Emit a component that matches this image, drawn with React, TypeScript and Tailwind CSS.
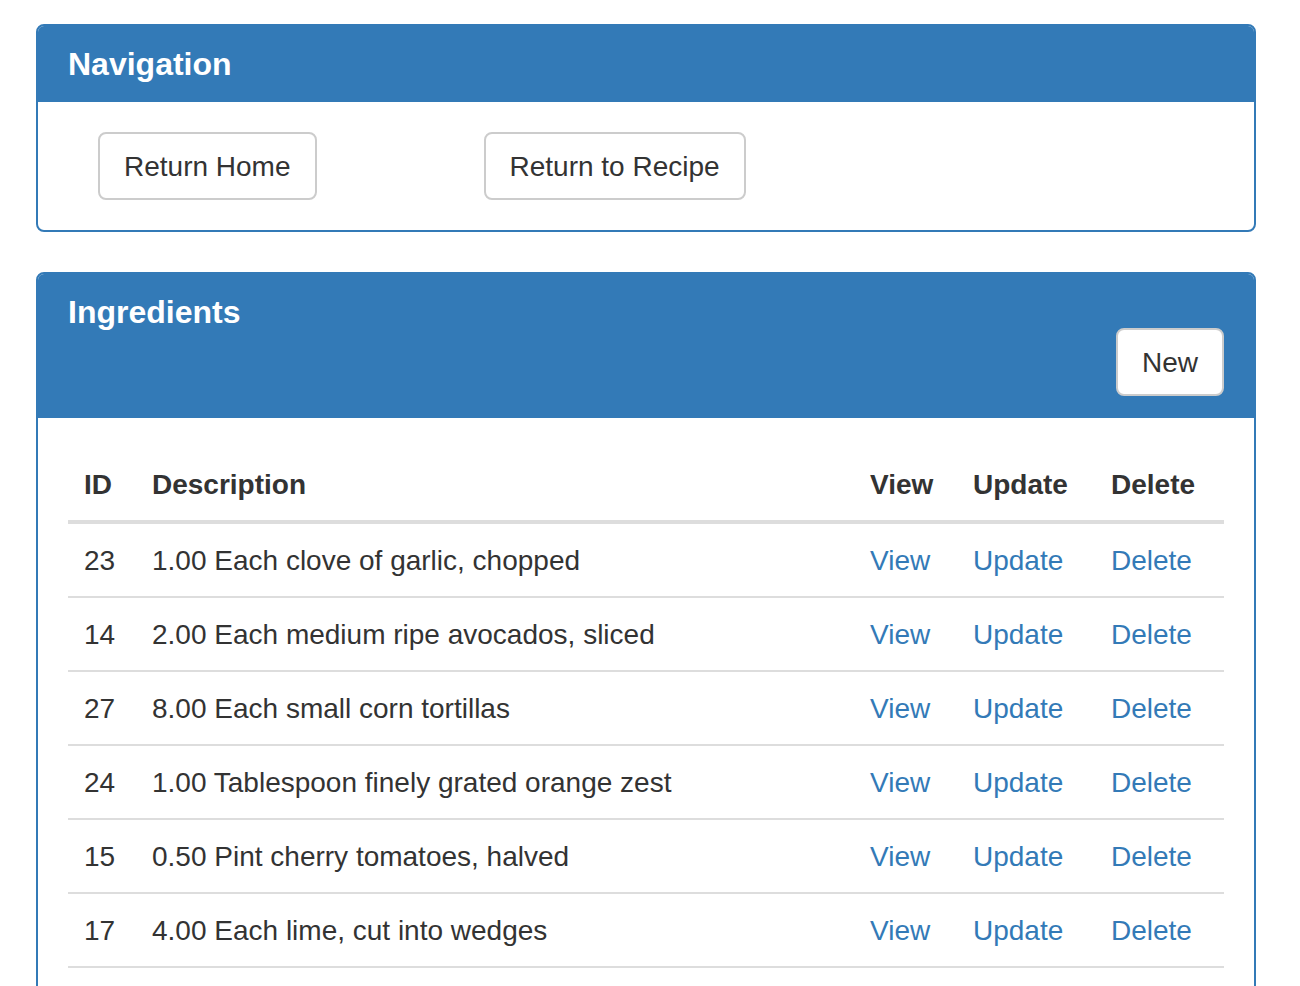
import React from "react";

type Ingredient = { id: number; description: string };

const INGREDIENTS: Ingredient[] = [
  { id: 23, description: "1.00 Each clove of garlic, chopped" },
  { id: 14, description: "2.00 Each medium ripe avocados, sliced" },
  { id: 27, description: "8.00 Each small corn tortillas" },
  { id: 24, description: "1.00 Tablespoon finely grated orange zest" },
  { id: 15, description: "0.50 Pint cherry tomatoes, halved" },
  { id: 17, description: "4.00 Each lime, cut into wedges" },
];

const btn =
  "inline-block rounded-[8px] border-2 border-[#ccc] bg-white px-[24px] pt-[13px] pb-[11px] text-[28px] leading-[40px] text-[#333]";

const Panel: React.FC<{ title: string; action?: React.ReactNode; children: React.ReactNode }> = ({ title, action, children }) => (
  <div className="mb-[40px] rounded-[8px] border-2 border-[#337ab7] bg-white">
    <div className="rounded-t-[6px] border-b-2 border-[#337ab7] bg-[#337ab7] px-[30px] py-[20px]">
      <h3 className="pt-[2px] text-[32px] leading-[32px] font-bold text-white">{title}</h3>
      {action && <div className="flex justify-end">{action}</div>}
    </div>
    <div className="p-[30px]">{children}</div>
  </div>
);

export default function App() {
  return (
    <div className="min-h-[986px] bg-white pt-[24px] pl-[36px] font-['Liberation_Sans',Arial,sans-serif] text-[#333]">
      <div className="w-[1220px]">
        <Panel title="Navigation">
          <div className="flex pl-[30px]">
            <a href="#" className={btn}>Return Home</a>
            <a href="#" className={`${btn} ml-[167px]`}>Return to Recipe</a>
          </div>
        </Panel>

        <Panel title="Ingredients" action={<a href="#" className={btn}>New</a>}>
          <table className="w-full table-fixed text-[28px] leading-[40px]">
            <colgroup>
              <col className="w-[68px]" />
              <col />
              <col className="w-[103px]" />
              <col className="w-[138px]" />
              <col className="w-[129px]" />
            </colgroup>
            <thead>
              <tr>
                {["ID", "Description", "View", "Update", "Delete"].map((h) => (
                  <th key={h} className="border-b-4 border-[#ddd] px-[16px] pt-[17px] pb-[15px] text-left font-bold">
                    {h}
                  </th>
                ))}
              </tr>
            </thead>
            <tbody>
              {INGREDIENTS.map((row) => (
                <tr key={row.id}>
                  <td className="border-y-2 border-[#ddd] px-[16px] pt-[17px] pb-[15px]">{row.id}</td>
                  <td className="border-y-2 border-[#ddd] px-[16px] pt-[17px] pb-[15px] whitespace-nowrap">{row.description}</td>
                  <td className="border-y-2 border-[#ddd] px-[16px] pt-[17px] pb-[15px]">
                    <a href="#" className="text-[#337ab7]">View</a>
                  </td>
                  <td className="border-y-2 border-[#ddd] px-[16px] pt-[17px] pb-[15px]">
                    <a href="#" className="text-[#337ab7]">Update</a>
                  </td>
                  <td className="border-y-2 border-[#ddd] px-[16px] pt-[17px] pb-[15px]">
                    <a href="#" className="text-[#337ab7]">Delete</a>
                  </td>
                </tr>
              ))}
            </tbody>
          </table>
        </Panel>
      </div>
    </div>
  );
}
